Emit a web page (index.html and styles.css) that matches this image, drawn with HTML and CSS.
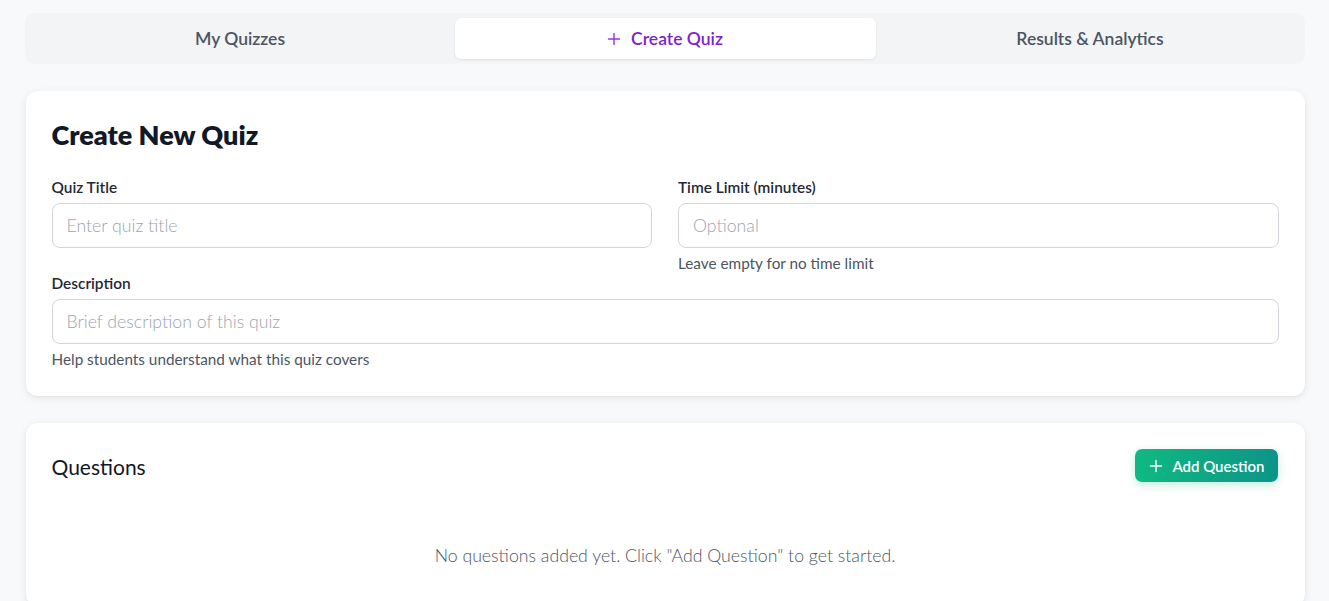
FILE: index.html
```html
<!DOCTYPE html>
<html>
<head>
<meta charset="utf-8">
<link rel="stylesheet" href="styles.css">
</head>
<body>
<div class="container">
  <nav class="tabs">
    <button class="tab">My Quizzes</button>
    <button class="tab active"><svg class="plus" width="14" height="14" viewBox="0 0 14 14"><path d="M7 1.5v11M1.5 7h11" stroke="currentColor" stroke-width="1.4" stroke-linecap="round"/></svg>Create Quiz</button>
    <button class="tab">Results &amp; Analytics</button>
  </nav>

  <section class="card">
    <h1 class="title">Create New Quiz</h1>
    <div class="grid">
      <div class="field">
        <label class="label">Quiz Title</label>
        <input class="input" type="text" placeholder="Enter quiz title">
      </div>
      <div class="field">
        <label class="label">Time Limit (minutes)</label>
        <input class="input" type="text" placeholder="Optional">
        <div class="help">Leave empty for no time limit</div>
      </div>
    </div>
    <div class="field">
      <label class="label">Description</label>
      <input class="input" type="text" placeholder="Brief description of this quiz">
      <div class="help">Help students understand what this quiz covers</div>
    </div>
  </section>

  <section class="card questions">
    <div class="q-head">
      <h2 class="q-title">Questions</h2>
      <button class="add-btn"><svg width="14" height="14" viewBox="0 0 14 14"><path d="M7 1.5v11M1.5 7h11" stroke="currentColor" stroke-width="1.5" stroke-linecap="round"/></svg>Add Question</button>
    </div>
    <p class="empty">No questions added yet. Click "Add Question" to get started.</p>
  </section>
</div>
</body>
</html>
```

FILE: styles.css
```css
* { box-sizing: border-box; }
html, body { margin: 0; padding: 0; }
body {
  background: #f8f9fb;
  font-family: Lato, "Open Sans", sans-serif;
  color: #111827;
}
.container {
  max-width: 1280px;
  margin: 0 auto;
  padding-top: 13px;
}
.tabs {
  display: grid;
  grid-template-columns: 1fr 1fr 1fr;
  gap: 4px;
  background: #f3f4f6;
  border-radius: 9px;
  padding: 5px 4px 5px 5px;
  height: 51px;
}
.tab {
  border: none;
  background: transparent;
  font-family: Lato, sans-serif;
  font-size: 17.5px;
  font-weight: 600;
  color: #4b5563;
  border-radius: 6px;
  display: flex;
  align-items: center;
  justify-content: center;
  gap: 10px;
  padding: 0;
  height: 41px;
}
.tab.active {
  background: #fff;
  color: #7e22ce;
  box-shadow: 0 1px 3px rgba(0,0,0,0.08);
}
.plus { color: #9333ea; }
.card {
  background: #fff;
  border-radius: 12px;
  box-shadow: 0 2px 8px rgba(0,0,0,0.08), 0 1px 2px rgba(0,0,0,0.04);
  margin: 27px 0 0 1px;
  padding: 26px 26px 28px;
}
.title {
  margin: 0 0 24px;
  font-size: 27px;
  font-weight: 800;
  line-height: 36px;
  color: #111827;
}
.grid {
  display: grid;
  grid-template-columns: 1fr 1fr;
  gap: 26px;
}
.field { display: flex; flex-direction: column; }
.label {
  font-size: 15.4px;
  font-weight: 600;
  color: #1f2937;
  line-height: 20px;
  margin-bottom: 6px;
}
.input {
  height: 45px;
  border: 1px solid #d1d5db;
  border-radius: 8px;
  padding: 0 14px;
  font-family: Lato, sans-serif;
  font-size: 17.7px;
  font-weight: 300;
  color: #111827;
  outline: none;
}
.input::placeholder { color: #9ca3af; font-weight: 300; }
.help {
  font-size: 15.3px;
  color: #4b5563;
  font-weight: 400;
  line-height: 18px;
  margin-top: 6px;
}
.grid + .field { margin-top: 1px; }
.questions { padding: 24px 26px 40px; }
.q-head {
  display: flex;
  justify-content: space-between;
  align-items: center;
}
.q-title {
  margin: 0;
  font-size: 21px;
  font-weight: 400;
  color: #111827;
  line-height: 40px;
}
.add-btn {
  border: none;
  border-radius: 7px;
  background: linear-gradient(90deg, #10b981, #0d9488);
  color: #fff;
  font-family: Lato, sans-serif;
  font-size: 15px;
  font-weight: 600;
  height: 33px;
  padding: 0 13px 0 14px;
  display: flex;
  align-items: center;
  gap: 9px;
  box-shadow: 0 3px 8px rgba(16,185,129,0.25);
  margin-right: 1px;
  margin-top: -3px;
}
.empty {
  text-align: center;
  margin: 58px 0 0;
  font-size: 17.7px;
  font-weight: 300;
  color: #4b5563;
}
```
